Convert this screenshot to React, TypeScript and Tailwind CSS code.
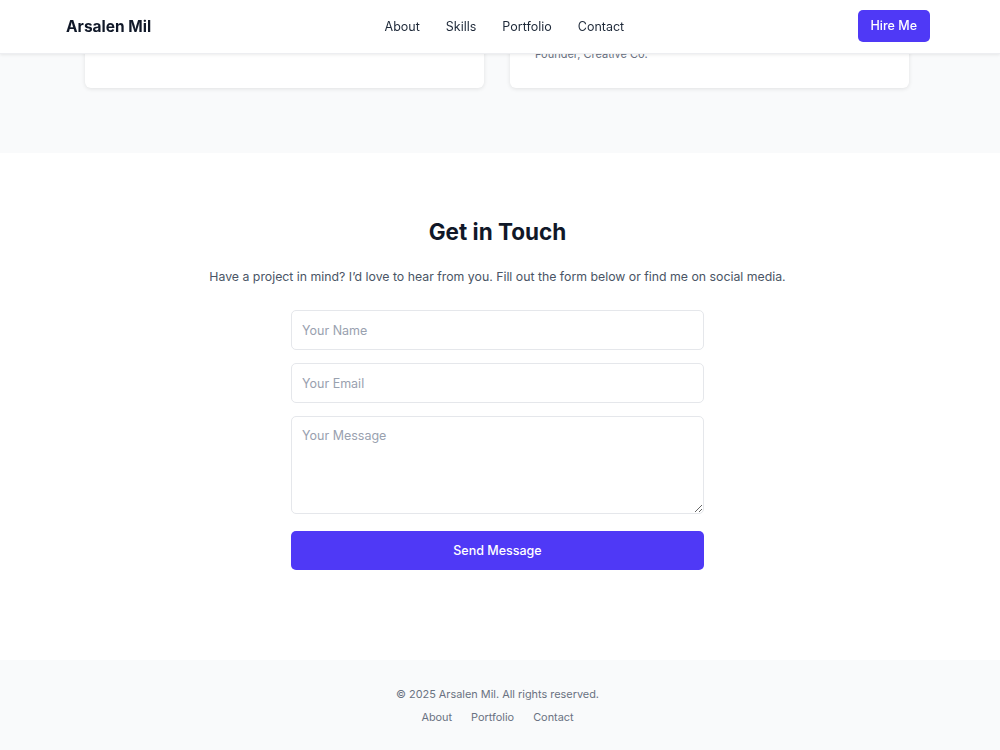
import React from 'react'

const NAV = ['About', 'Skills', 'Portfolio', 'Contact']
const FOOTER_LINKS = ['About', 'Portfolio', 'Contact']

function Header() {
  return (
    <header className="fixed top-0 left-0 right-0 z-50 h-[54px] bg-white shadow-[0_1px_3px_rgba(0,0,0,0.08)] border-b border-gray-200/70">
      <div className="flex h-full items-center justify-between pl-[66px] pr-[70px]">
        <span className="pt-[1px] text-[15.5px] font-bold text-gray-900">Arsalen Mil</span>
        <nav className="flex items-center gap-[26px] pt-[2px]">
          {NAV.map((item) => (
            <a key={item} className="text-[12.5px] text-gray-800">
              {item}
            </a>
          ))}
        </nav>
        <button className="mb-[1px] h-[32px] rounded-[5px] bg-indigo-600 px-[13px] pt-[1px] text-[12.5px] font-medium text-white">
          Hire Me
        </button>
      </div>
    </header>
  )
}

function Testimonials() {
  return (
    <section className="flex h-[153px] flex-col justify-end overflow-hidden bg-gray-50 pl-[85px] pr-[91px] pb-[65px]">
      <div className="grid grid-cols-2 gap-[26px]">
        {/* Card tails, page is scrolled past their tops */}
        <div className="h-[200px] rounded-[6px] bg-white shadow-[0_1px_4px_rgba(0,0,0,0.1)]" />
        <div className="flex h-[200px] flex-col justify-end rounded-[6px] bg-white px-[25px] pb-[26px] shadow-[0_1px_4px_rgba(0,0,0,0.1)]">
          <p className="text-[12.5px] font-semibold text-gray-900">Sarah Johnson</p>
          <p className="text-[11px] leading-[16px] text-gray-500">Founder, Creative Co.</p>
        </div>
      </div>
    </section>
  )
}

function Contact() {
  const field =
    'w-full rounded-[5px] border border-gray-200 bg-white px-[10px] text-[12.5px] text-gray-900 placeholder:text-gray-400 outline-none'
  return (
    <section className="flex flex-col items-center bg-white pt-[64px] pb-[90px] pr-[5px]">
      <h2 className="text-[22.5px] leading-[29px] font-bold text-gray-900">Get in Touch</h2>
      <p className="mt-[21px] text-[12.3px] leading-[20px] text-gray-600">
        Have a project in mind? I’d love to hear from you. Fill out the form below or find me on social media.
      </p>
      <form className="mt-[23px] flex w-[413px] flex-col gap-[13px]">
        <input className={`${field} h-[40px]`} placeholder="Your Name" />
        <input className={`${field} h-[40px]`} placeholder="Your Email" />
        <textarea className={`${field} h-[98px] py-[9px] leading-[20px]`} placeholder="Your Message" />
        <button
          type="button"
          className="mt-[4px] h-[39px] w-full rounded-[5px] bg-indigo-600 pt-[1px] text-[12.5px] font-medium text-white"
        >
          Send Message
        </button>
      </form>
    </section>
  )
}

function Footer() {
  return (
    <footer className="flex h-[90px] flex-col items-center justify-center bg-gray-50 pr-[5px]">
      <p className="text-[10.9px] leading-[16px] text-gray-500">© 2025 Arsalen Mil. All rights reserved.</p>
      <div className="mt-[7px] flex gap-[19px]">
        {FOOTER_LINKS.map((l) => (
          <a key={l} className="text-[10.9px] leading-[16px] text-gray-500">
            {l}
          </a>
        ))}
      </div>
    </footer>
  )
}

export default function App() {
  return (
    <div className="min-h-[750px] bg-white font-['Inter',sans-serif]">
      <Header />
      <Testimonials />
      <Contact />
      <Footer />
    </div>
  )
}
